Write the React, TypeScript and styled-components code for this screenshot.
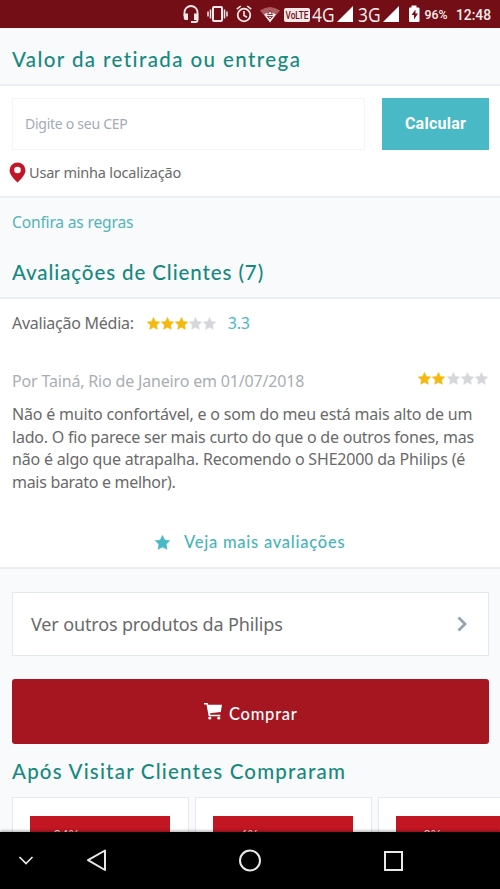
import React from "react";
import styled, { createGlobalStyle } from "styled-components";

const Global = createGlobalStyle`
  * { box-sizing: border-box; }
  body { margin: 0; background: #f8fafc; overflow: hidden; }
  button, input { font: inherit; border: 0; padding: 0; margin: 0; }
  svg { display: block; flex: none; }
`;

const Screen = styled.div`
  width: 500px;
  height: 889px;
  display: flex;
  flex-direction: column;
  overflow: hidden;
  background: #f8fafc;
  color: #6a6a6a;
  font-family: "Noto Sans", "Open Sans", sans-serif;
`;

const StatusBar = styled.header`
  height: 28px;
  flex: none;
  background: #730e16;
`;

const Line = styled.span<{ $size: number; $track?: number; $color?: string; $weight?: number }>`
  font-size: ${(p) => p.$size}px;
  letter-spacing: ${(p) => p.$track ?? 0}px;
  color: ${(p) => p.$color ?? "inherit"};
  font-weight: ${(p) => p.$weight ?? 400};
  white-space: nowrap;
`;

const Content = styled.main`
  flex: 1;
  min-height: 0;
  overflow: hidden;
`;

const HeadingBar = styled.div<{ $height: number; $pad: number }>`
  height: ${(p) => p.$height}px;
  padding: ${(p) => p.$pad}px 12px 0;
`;

const Heading = styled.h2<{ $track: number }>`
  margin: 0;
  font-family: Lato, "Noto Sans", sans-serif;
  font-size: 20.5px;
  line-height: 28px;
  font-weight: 500;
  letter-spacing: ${(p) => p.$track}px;
  color: #17897f;
  white-space: nowrap;
`;

const Panel = styled.section<{ $height: number }>`
  height: ${(p) => p.$height}px;
  background: #fff;
  border-top: 2px solid #ebeff3;
  border-bottom: 2px solid #ebeff3;
`;

const ZipRow = styled.div`
  display: flex;
  justify-content: space-between;
  padding: 12px 11px 0 12px;
`;

const ZipInput = styled.input`
  width: 353px;
  height: 52px;
  border: 1px solid #f4f5f6;
  padding: 0 12px 2px;
  font-size: 14px;
  letter-spacing: -0.27px;
  background: #fff;
  outline: 0;
  &::placeholder { color: #a3abb5; opacity: 1; }
`;

const CalcButton = styled.button`
  width: 107px;
  height: 52px;
  padding-bottom: 1px;
  background: #48b9c5;
  color: #fff;
  font-family: Roboto, sans-serif;
  font-weight: 700;
  font-size: 16px;
  letter-spacing: 0.25px;
`;

const LocationRow = styled.div`
  display: flex;
  align-items: center;
  gap: 3px;
  height: 24px;
  margin: 10px 0 0 9px;
`;

const RulesLink = styled.a`
  display: block;
  padding: 12px 12px 0;
  height: 60px;
  line-height: 24px;
`;

const AverageRow = styled.div`
  display: flex;
  align-items: center;
  height: 24px;
  margin: 12px 12px 0;
`;

const StarRow = styled.div<{ $left?: number }>`
  display: flex;
  gap: 1px;
  margin-left: ${(p) => p.$left ?? 0}px;
  margin-right: 12px;
`;

const ReviewHead = styled.div`
  display: flex;
  justify-content: space-between;
  height: 24px;
  line-height: 24px;
  margin: 34px 0 0 12px;
  & > ${StarRow} { gap: 1.25px; padding-top: 3px; margin-right: 12px; }
`;

const ReviewText = styled.p`
  margin: 10px 12px 0;
  display: flex;
  flex-direction: column;
  line-height: 22.5px;
`;

const MoreLink = styled.a`
  display: flex;
  align-items: center;
  gap: 14px;
  height: 24px;
  margin: 37px 0 0 155px;
  font-family: Lato, "Noto Sans", sans-serif;
`;

const BrandCard = styled.a`
  display: flex;
  align-items: center;
  justify-content: space-between;
  margin: 23px 11px 0 12px;
  padding: 0 21px 0 18px;
  height: 64px;
  border: 1px solid #e3e8ec;
  background: #fff;
`;

const BuyButton = styled.button`
  display: flex;
  align-items: center;
  gap: 7px;
  width: 477px;
  height: 65px;
  margin: 23px 0 0 12px;
  padding-left: 192px;
  border-radius: 3px;
  background: #a51621;
  color: #fff;
  font-family: Lato, sans-serif;
  & > ${Line} { padding-top: 5px; }
`;

const Products = styled.div`
  display: flex;
  gap: 6px;
  margin: 11px 0 0 12px;
`;

const Product = styled.article`
  flex: none;
  width: 177px;
  height: 70px;
  padding: 18px 18px 0 17px;
  border: 1px solid #e4e9f0;
  background: #fff;
`;

const Banner = styled.div`
  height: 40px;
  padding-top: 9px;
  text-align: center;
  line-height: 17px;
  background: #c31623;
  color: #f9dfe1;
  font-family: Lato, sans-serif;
  white-space: nowrap;
`;

const NavBar = styled.nav`
  flex: none;
  height: 57px;
  background: #000;
  box-shadow: 0 -1px 3px rgba(0, 0, 0, 0.35);
  z-index: 1;
`;

function Star({ color, size = 13 }: { color: string; size?: number }) {
  return (
    <svg width={size} height={size} viewBox="0 0 24 24" fill={color}>
      <path d="M12 .8l3.5 7.3 8 1.1-5.8 5.6 1.4 8L12 19l-7.1 3.8 1.4-8L.5 9.2l8-1.1z" stroke={color} strokeWidth="1" strokeLinejoin="round" />
    </svg>
  );
}

function Stars({ value, left }: { value: number; left?: number }) {
  return (
    <StarRow $left={left}>
      {[1, 2, 3, 4, 5].map((n) => (
        <Star key={n} color={n <= value ? "#f4b90f" : "#d6d7da"} />
      ))}
    </StarRow>
  );
}

function StatusIcons() {
  return (
    <svg width="500" height="28" viewBox="0 0 500 28" fill="none" stroke="#f6e9e9">
      <path d="M184.500 16v-3.500a6.500 6.500 0 0 1 13 0V20q0 2-2 2h-4.500" strokeWidth="1.8" />
      <path d="M183.700 13.500h4.300v6.500h-2.300q-2 0-2-2zM194 13.500h4.300v6.500h-4.300z" fill="#f6e9e9" stroke="none" />
      <rect x="213" y="7" width="9" height="14" rx="1" strokeWidth="2" />
      <path d="M210.500 9.500v9M224.500 9.500v9M208 11.500v5M227 11.500v5" strokeWidth="1.500" />
      <circle cx="244" cy="15" r="6.300" strokeWidth="1.800" />
      <path d="M244 11v4.500l3 1.700M236.800 9.200l4-3.200M251.200 9.200l-4-3.200" strokeWidth="1.600" />
      <path d="M260 10.500q10-7 20 0l-10 12z" fill="#a95b60" stroke="none" />
      <path d="M264 14.200q6-3.500 12 0l-6 8.300z" fill="#f6e9e9" stroke="none" />
      <path d="M270 10.500l-2.500 4h5zM267.500 16.500h5l-2.500 2.500z" stroke="#730e16" strokeWidth="0.800" fill="#f6e9e9" />
      <rect x="284" y="8" width="26" height="14" rx="2" fill="#f6e9e9" stroke="none" />
      <path d="M353 6v16h-16zM399 6v16h-16z" fill="#fff" stroke="none" />
      <path d="M410 7.500h1.500v-2h5v2h2q1 0 1 1v12.500q0 1-1 1h-8.500q-1 0-1-1V8.500q0-1 1-1z" fill="#fff" stroke="none" />
      <path d="M415.500 9.500l-4 5.500h2.500v4.500l4-6h-2.500z" fill="#730e16" stroke="none" />
      <g stroke="none" fill="#f8eeee" fontFamily="Roboto, sans-serif">
        <text x="285.500" y="19" fontSize="11" fontWeight="500" fill="#730e16" textLength="23" lengthAdjust="spacingAndGlyphs">VoLTE</text>
        <text x="312" y="21.800" fontSize="20.500" fontFamily="Open Sans" textLength="22.500" lengthAdjust="spacingAndGlyphs">4G</text>
        <text x="358" y="21.800" fontSize="20.500" fontFamily="Open Sans" textLength="22.500" lengthAdjust="spacingAndGlyphs">3G</text>
        <text x="424.500" y="18.500" fontSize="12" fontWeight="500" textLength="23" lengthAdjust="spacingAndGlyphs">96%</text>
        <text x="456" y="19.500" fontSize="14.200" fontWeight="500" textLength="35" lengthAdjust="spacingAndGlyphs">12:48</text>
      </g>
    </svg>
  );
}

const review = [
  { text: "Não é muito confortável, e o som do meu está mais alto de um", track: -0.19 },
  { text: "lado. O fio parece ser mais curto do que o de outros fones, mas", track: -0.22 },
  { text: "não é algo que atrapalha. Recomendo o SHE2000 da Philips (é", track: -0.19 },
  { text: "mais barato e melhor).", track: -0.3 },
];

export default function App() {
  return (
    <Screen>
      <Global />
      <StatusBar>
        <StatusIcons />
      </StatusBar>
      <Content>
        <HeadingBar $height={56} $pad={17}>
          <Heading $track={1.4}>Valor da retirada ou entrega</Heading>
        </HeadingBar>
        <Panel $height={114}>
          <ZipRow>
            <ZipInput placeholder="Digite o seu CEP" />
            <CalcButton>Calcular</CalcButton>
          </ZipRow>
          <LocationRow>
            <svg width="17" height="21" viewBox="0 0 17 21">
              <path d="M8.500.5a8 8 0 0 1 8 8c0 5-8 12-8 12s-8-7-8-12a8 8 0 0 1 8-8z" fill="#c11726" />
              <circle cx="8.500" cy="8" r="3.300" fill="#fff" />
            </svg>
            <Line $size={14.5} $track={-0.2}>Usar minha localização</Line>
          </LocationRow>
        </Panel>
        <RulesLink>
          <Line $size={15.6} $track={-0.18} $color="#52b4b8">Confira as regras</Line>
        </RulesLink>
        <HeadingBar $height={39} $pad={0}>
          <Heading $track={0.9}>Avaliações de Clientes (7)</Heading>
        </HeadingBar>
        <Panel $height={272}>
          <AverageRow>
            <Line $size={16} $track={-0.25}>Avaliação Média:</Line>
            <Stars value={3} left={13} />
            <Line $size={16} $track={-0.2} $color="#48b9c5">3.3</Line>
          </AverageRow>
          <ReviewHead>
            <Line $size={16} $track={-0.17} $color="#a9aeb3">Por Tainá, Rio de Janeiro em 01/07/2018</Line>
            <Stars value={2} />
          </ReviewHead>
          <ReviewText>
            {review.map((l) => (
              <Line key={l.text} $size={16} $track={l.track}>{l.text}</Line>
            ))}
          </ReviewText>
          <MoreLink>
            <Star color="#48b9c5" size={15} />
            <Line $size={16.5} $track={0.75} $color="#48b4b9" $weight={500}>Veja mais avaliações</Line>
          </MoreLink>
        </Panel>
        <BrandCard>
          <Line $size={18} $track={-0.14}>Ver outros produtos da Philips</Line>
          <svg width="10" height="16" viewBox="0 0 10 16" fill="none" stroke="#93a3b0" strokeWidth="2.800">
            <path d="M1.500 1.500L8 8l-6.500 6.500" />
          </svg>
        </BrandCard>
        <BuyButton>
          <svg width="18" height="17" viewBox="0 0 18 17" fill="#fff">
            <path d="M0 0h3.600l.7 1.700H18L16.800 9 6 10.300l.3 1.400h10v1.500H4.700L2.500 1.600H0z" />
            <circle cx="5.800" cy="15" r="1.600" />
            <circle cx="14.800" cy="15" r="1.600" />
          </svg>
          <Line $size={16.5} $track={0.75} $weight={500}>Comprar</Line>
        </BuyButton>
        <HeadingBar $height={42} $pad={13}>
          <Heading $track={1.2}>Após Visitar Clientes Compraram</Heading>
        </HeadingBar>
        <Products>
          {["94%", "6%", "3%"].map((pct) => (
            <Product key={pct}>
              <Banner>
                <Line $size={13}>{pct} compraram</Line>
              </Banner>
            </Product>
          ))}
        </Products>
      </Content>
      <NavBar>
        <svg width="500" height="57" viewBox="0 0 500 57" fill="none" stroke="#e8e8e8" strokeWidth="2">
          <path d="M19.500 25l6.500 6.500 6.500-6.500" strokeWidth="1.700" />
          <path d="M105 18.500v19.500L88 28.200z" strokeLinejoin="round" />
          <circle cx="250" cy="28.500" r="10" />
          <rect x="385" y="20" width="17" height="18" />
        </svg>
      </NavBar>
    </Screen>
  );
}
